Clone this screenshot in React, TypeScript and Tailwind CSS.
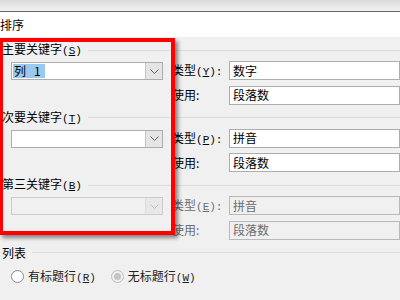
import React from "react";

const font = { fontFamily: '"Noto Sans CJK SC", "Noto Sans", sans-serif' };

// half-width (X) access key part, SimSun-like fixed width
const Key: React.FC<{ k: string; colon?: boolean }> = ({ k, colon }) => (
  <span className="font-['Liberation_Mono',monospace] text-[11px]">
    (<u>{k}</u>){colon ? ":" : ""}
  </span>
);

const Chevron: React.FC<{ color: string }> = ({ color }) => (
  <svg width="9" height="5" viewBox="0 0 9 5" fill="none">
    <path d="M0.5 0.5 L4.5 4.5 L8.5 0.5" stroke={color} strokeWidth="1" />
  </svg>
);

const Combo: React.FC<{ value?: boolean; disabled?: boolean }> = ({ value, disabled }) => (
  <div
    className={`ml-[9px] flex h-[18px] w-[152px] border ${
      disabled ? "border-[#cccccc] bg-[#f0f0f0]" : "border-[#adadad] bg-white"
    }`}
  >
    <div className="flex flex-1 items-center pl-[1px]">
      {value && (
        <span className="flex bg-[#99c9ef] px-[1px] text-[12px] leading-[14px] text-black">
          <span>列</span>
          <span className="ml-[8px] pr-[3px]">1</span>
        </span>
      )}
    </div>
    <div
      className={`flex w-[17px] items-center justify-center border-l ${
        disabled ? "border-[#dcdcdc] bg-[#e8e8e8]" : "border-[#c8c8c8] bg-[#e5e5e5]"
      }`}
    >
      <Chevron color={disabled ? "#bfbfbf" : "#606060"} />
    </div>
  </div>
);

const Field: React.FC<{ value: string; disabled?: boolean }> = ({ value, disabled }) => (
  <div
    className={`flex h-[19px] flex-1 items-center border pl-[3px] text-[12px] ${
      disabled
        ? "border-[#b9b9b9] bg-[#f0f0f0] text-[#6d6d6d]"
        : "border-[#adadad] bg-white text-black"
    }`}
  >
    {value}
  </div>
);

const Group: React.FC<{
  title: string;
  hk: string;
  combo?: boolean;
  typeKey: string;
  typeValue: string;
  disabled?: boolean;
}> = ({ title, hk, combo, typeKey, typeValue, disabled }) => (
  <div className="mb-[6px]">
    <div className="flex h-[14px] items-center gap-[6px] text-[12px] text-black">
      <span>
        {title}
        <Key k={hk} />
      </span>
      <div className="h-px flex-1 bg-[#dcdcdc]" />
    </div>
    <div className="mt-[4px] flex items-start">
      <div className="mt-[1px] w-[170px]">
        <Combo value={combo} disabled={disabled} />
      </div>
      <div className={`flex flex-1 flex-col gap-[5px] text-[12px] ${disabled ? "text-[#6d6d6d]" : "text-black"}`}>
        <div className="flex items-center">
          <span className="w-[57px]">
            类型<Key k={typeKey} colon />
          </span>
          <Field value={typeValue} disabled={disabled} />
        </div>
        <div className="flex items-center">
          <span className="w-[57px]">使用:</span>
          <Field value="段落数" disabled={disabled} />
        </div>
      </div>
    </div>
  </div>
);

const Radio: React.FC<{ checked?: boolean; disabled?: boolean; children: React.ReactNode }> = ({
  checked,
  disabled,
  children,
}) => (
  <div className="flex items-center gap-[4px]">
    <span
      className={`flex h-[13px] w-[13px] items-center justify-center rounded-full border ${
        disabled ? "border-[#bcbcbc] bg-[#f0f0f0]" : "border-[#8a8a8a] bg-white"
      }`}
    >
      {checked && <span className="h-[7px] w-[7px] rounded-full bg-[#c4c4c4]" />}
    </span>
    <span className="text-[12px] text-[#222]">{children}</span>
  </div>
);

export default function App() {
  return (
    <div className="relative h-[300px] w-[400px] overflow-hidden bg-[#f0f0f0]" style={font}>
      <div className="h-[11px] bg-gradient-to-b from-[#dadada] to-[#f3f3f3]" />
      <div className="flex h-[26px] items-center border-t border-[#646464] bg-white text-[12px] text-black">
        排序
      </div>

      <div className="pt-[6px] pl-[2px]">
        <Group title="主要关键字" hk="S" combo typeKey="Y" typeValue="数字" />
        <Group title="次要关键字" hk="T" typeKey="P" typeValue="拼音" />
        <Group title="第三关键字" hk="B" typeKey="E" typeValue="拼音" disabled />

        <div className="flex h-[14px] items-center gap-[6px] text-[12px]">
          <span>列表</span>
          <div className="h-px flex-1 bg-[#dcdcdc]" />
        </div>
        <div className="mt-[7px] ml-[9px] flex gap-[15px]">
          <Radio>
            有标题行<Key k="R" />
          </Radio>
          <Radio checked disabled>
            无标题行<Key k="W" />
          </Radio>
        </div>
        <div className="mt-[14px] flex justify-between">
          <div className="h-[20px] w-[76px] border border-[#adadad] bg-[#e1e1e1]" />
          <div className="h-[20px] w-[60px] border-2 border-[#0078d7] bg-[#e1e1e1]" />
        </div>
      </div>

      {/* red annotation box drawn over the dialog */}
      <div className="pointer-events-none absolute left-[-1px] top-[38px] h-[197px] w-[176px] border-4 border-[#ff0000] shadow-[3px_3px_4px_rgba(0,0,0,0.45)]" />
    </div>
  );
}
